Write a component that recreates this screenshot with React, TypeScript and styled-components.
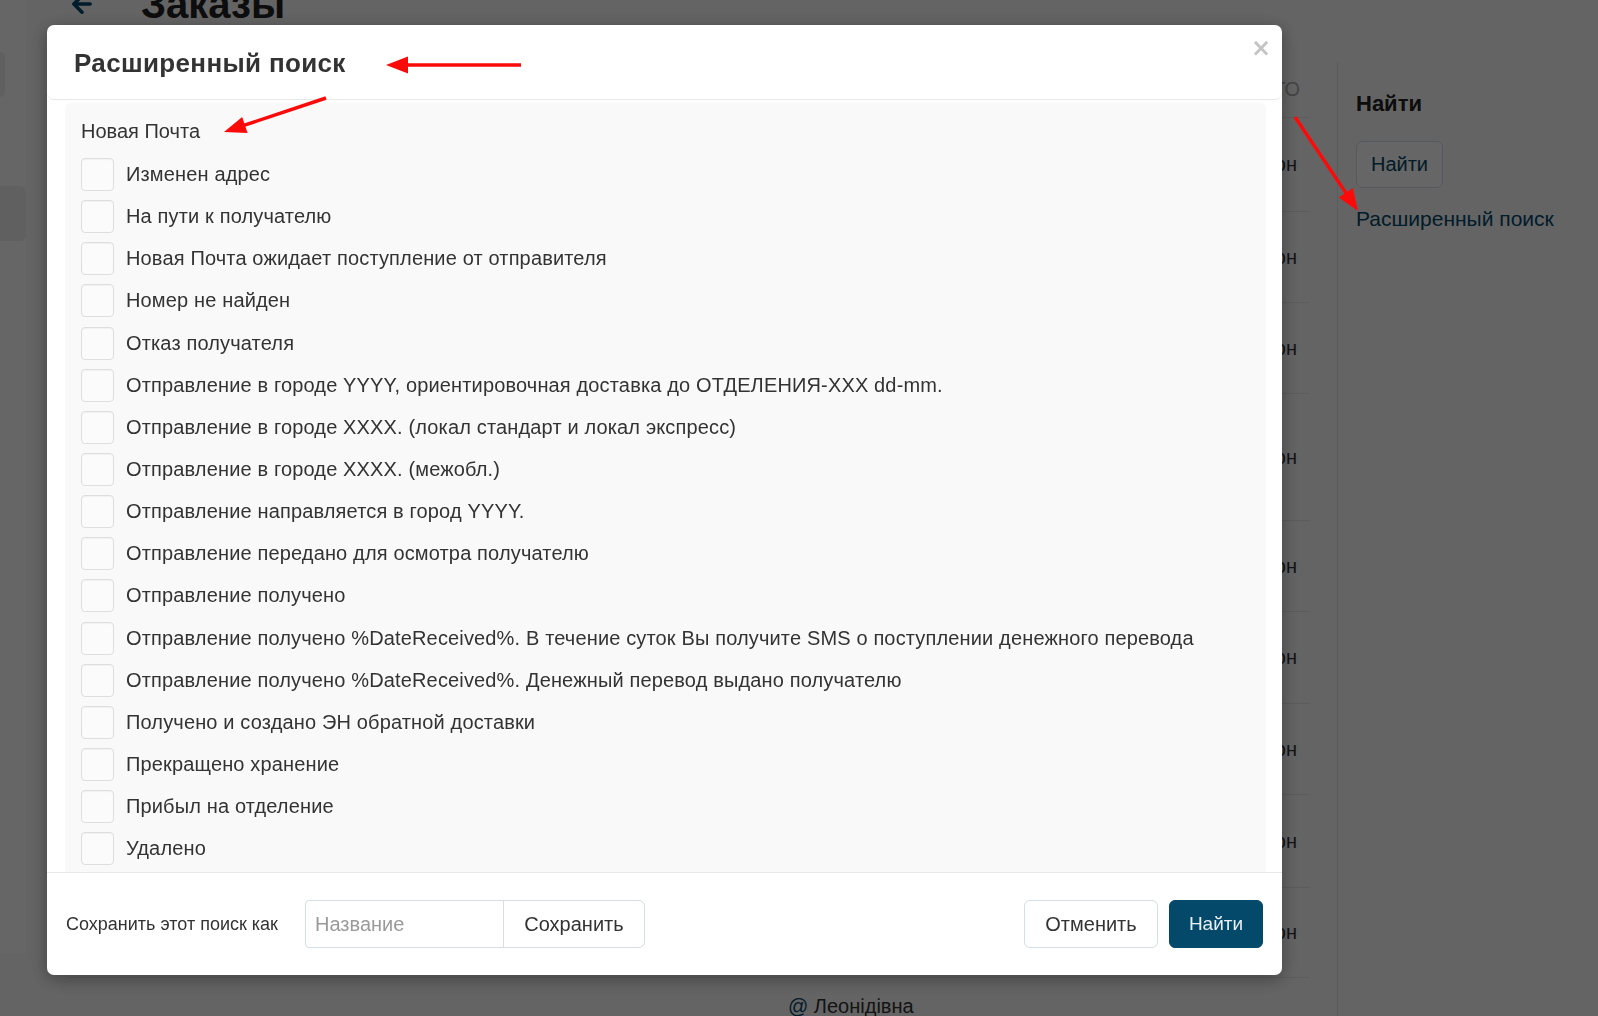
import React from 'react'
import styled, { createGlobalStyle } from 'styled-components'

const GlobalStyle = createGlobalStyle`
  html, body {
    margin: 0;
    padding: 0;
    width: 1598px;
    height: 1016px;
    overflow: hidden;
    background: #fafafa;
    font-family: 'Liberation Sans', Arial, sans-serif;
    color: #333;
  }
  * { box-sizing: border-box; }
`

const Page = styled.div`
  display: flex;
  width: 1598px;
  height: 1016px;
  overflow: hidden;
`

const Sidebar = styled.aside`
  width: 26px;
  height: 953px;
  background: #ffffff;
  display: flex;
  flex-direction: column;
  padding-top: 52px;
  gap: 89px;
`

const SideTab = styled.div<{ $w: number; $h: number }>`
  width: ${({ $w }) => $w}px;
  height: ${({ $h }) => $h}px;
  background: #f1f1f1;
  border-radius: 0 6px 6px 0;
`

const Main = styled.main`
  flex: 1;
  display: flex;
  flex-direction: column;
  padding-left: 42px;
`

const HeadingRow = styled.div`
  display: flex;
  align-items: center;
  gap: 45px;
  height: 48px;
  margin-top: -20px;
  color: #04486a;
`

const Heading = styled.h1`
  margin: 0;
  font-size: 40px;
  line-height: 48px;
  font-weight: 700;
  color: #222;
`

const Content = styled.div`
  display: flex;
  margin-top: 34px;
  flex: 1;
`

const Table = styled.div`
  width: 1241px;
  display: flex;
  flex-direction: column;
`

const TableHead = styled.div`
  height: 56px;
  display: flex;
  align-items: center;
  justify-content: flex-end;
  padding-right: 9px;
  font-size: 20px;
  color: #aaa;
  border-bottom: 1px solid #e5e5e5;
`

const TableRow = styled.div<{ $h: number }>`
  height: ${({ $h }) => $h}px;
  display: grid;
  grid-template-columns: 720px 1fr auto;
  align-items: center;
  padding-right: 12px;
  font-size: 20px;
  color: #333;
  border-bottom: 1px solid #e5e5e5;
`

const Cell = styled.span`
  white-space: nowrap;
`

const Mention = styled.span`
  color: #04486a;
`

const Divider = styled.div`
  width: 1px;
  background: #e5e5e5;
  margin-left: 28px;
`

const SidePanel = styled.div`
  padding: 28px 0 0 18px;
  display: flex;
  flex-direction: column;
  align-items: flex-start;
`

const PanelTitle = styled.h3`
  margin: 0;
  font-size: 22px;
  line-height: 28px;
  font-weight: 700;
  color: #222;
`

const PanelButton = styled.button`
  margin-top: 23px;
  width: 87px;
  height: 47px;
  border: 1px solid #d5dde5;
  border-radius: 6px;
  background: #fff;
  font-family: inherit;
  font-size: 20px;
  color: #04486a;
`

const PanelLink = styled.a`
  margin-top: 19px;
  font-size: 21px;
  color: #04486a;
  text-decoration: none;
  line-height: 24px;
`

const Overlay = styled.div`
  position: fixed;
  inset: 0;
  background: rgba(0, 0, 0, 0.6);
  padding: 25px 0 0 47px;
`

const Modal = styled.div`
  position: relative;
  width: 1235px;
  height: 950px;
  background: #fff;
  border-radius: 7px;
  box-shadow: 0 4px 18px rgba(0, 0, 0, 0.35);
  display: flex;
  flex-direction: column;
  overflow: hidden;
`

const ModalHeader = styled.div`
  height: 75px;
  display: flex;
  align-items: center;
  padding: 0 27px;
  border-bottom: 1px solid #e8e8e8;
  border-radius: 0 0 7px 7px;
`

const ModalTitle = styled.h2`
  margin: 2px 0 0;
  font-size: 26px;
  letter-spacing: 0.35px;
  font-weight: 700;
  color: #333;
`

const CloseButton = styled.button`
  position: absolute;
  top: 11px;
  right: 10px;
  width: 22px;
  height: 24px;
  border: 0;
  padding: 0;
  background: none;
  font-family: 'DejaVu Sans', sans-serif;
  font-size: 24px;
  font-weight: 700;
  line-height: 24px;
  color: #c4c4c4;
`

const ModalBody = styled.div`
  height: 772px;
  padding: 3px 16px 0 18px;
`

const Group = styled.div`
  height: 100%;
  background: #f9f9f9;
  border-radius: 6px 6px 0 0;
  padding: 17px 16px 0 16px;
  overflow: hidden;
`

const GroupTitle = styled.div`
  font-size: 20px;
  line-height: 22px;
  color: #333;
  margin-bottom: 16px;
`

const OptionList = styled.div`
  display: flex;
  flex-direction: column;
  gap: 9.15px;
`

const Option = styled.label`
  display: flex;
  align-items: center;
  gap: 12px;
  height: 33px;
  font-size: 20px;
  letter-spacing: 0.15px;
  color: #333;
  white-space: nowrap;
`

const Box = styled.span`
  width: 33px;
  height: 33px;
  flex: none;
  border: 1px solid #dedede;
  border-radius: 4px;
  background: #fbfbfb;
  box-shadow: inset 0 1px 1px rgba(0, 0, 0, 0.04);
`

const ModalFooter = styled.div`
  flex: 1;
  display: flex;
  align-items: center;
  justify-content: space-between;
  padding: 0 19px 0 19px;
  border-top: 1px solid #e8e8e8;
`

const SaveGroup = styled.div`
  display: flex;
  align-items: center;
`

const SaveLabel = styled.span`
  font-size: 18px;
  color: #333;
  margin-right: 27px;
`

const NameInput = styled.input`
  width: 199px;
  height: 48px;
  border: 1px solid #d5dde5;
  border-radius: 4px 0 0 4px;
  padding: 0 9px;
  font-family: inherit;
  font-size: 20px;
  color: #333;
  outline: none;

  &::placeholder {
    color: #9a9a9a;
  }
`

const Button = styled.button<{ $primary?: boolean; $w: number; $attached?: boolean }>`
  width: ${({ $w }) => $w}px;
  height: 48px;
  border: 1px solid ${({ $primary }) => ($primary ? '#04486a' : '#d5dde5')};
  border-radius: ${({ $attached }) => ($attached ? '0 6px 6px 0' : '6px')};
  margin-left: ${({ $attached }) => ($attached ? '-1px' : '0')};
  background: ${({ $primary }) => ($primary ? '#04486a' : '#fff')};
  color: ${({ $primary }) => ($primary ? '#e8f0f6' : '#333')};
  font-family: inherit;
  font-size: ${({ $primary }) => ($primary ? '19px' : '20px')};
  white-space: nowrap;
  cursor: pointer;
`

const Actions = styled.div`
  display: flex;
  gap: 11px;
`

const Annotations = styled.svg`
  position: fixed;
  inset: 0;
  pointer-events: none;
`

const statuses = [
  'Изменен адрес',
  'На пути к получателю',
  'Новая Почта ожидает поступление от отправителя',
  'Номер не найден',
  'Отказ получателя',
  'Отправление в городе YYYY, ориентировочная доставка до ОТДЕЛЕНИЯ-XXX dd-mm.',
  'Отправление в городе XXXX. (локал стандарт и локал экспресс)',
  'Отправление в городе XXXX. (межобл.)',
  'Отправление направляется в город YYYY.',
  'Отправление передано для осмотра получателю',
  'Отправление получено',
  'Отправление получено %DateReceived%. В течение суток Вы получите SMS о поступлении денежного перевода',
  'Отправление получено %DateReceived%. Денежный перевод выдано получателю',
  'Получено и создано ЭН обратной доставки',
  'Прекращено хранение',
  'Прибыл на отделение',
  'Удалено',
]

const rowHeights = [94, 91, 91, 127, 91, 92, 91, 93, 90]

type Pt = [number, number]

// красная стрелка-пометка: хвост -> острие
const Arrow = ({ from, to }: { from: Pt; to: Pt }) => {
  const dx = to[0] - from[0]
  const dy = to[1] - from[1]
  const len = Math.hypot(dx, dy)
  const ux = dx / len
  const uy = dy / len
  const head = 22
  const half = 8.5
  const bx = to[0] - ux * head
  const by = to[1] - uy * head
  const pts = [
    `${to[0]},${to[1]}`,
    `${bx - uy * half},${by + ux * half}`,
    `${bx + uy * half},${by - ux * half}`,
  ].join(' ')
  return (
    <g>
      <line x1={from[0]} y1={from[1]} x2={bx + ux * 2} y2={by + uy * 2} stroke="#fb0a0a" strokeWidth={3.5} />
      <polygon points={pts} fill="#fb0a0a" />
    </g>
  )
}

export default function App() {
  return (
    <>
      <GlobalStyle />
      <Page>
        <Sidebar>
          <SideTab $w={5} $h={45} />
          <SideTab $w={26} $h={55} />
        </Sidebar>
        <Main>
          <HeadingRow>
            <svg width="28" height="28" viewBox="0 0 24 24" fill="none" stroke="currentColor" strokeWidth="3" strokeLinecap="round" strokeLinejoin="round">
              <path d="M19 12H5M12 19l-7-7 7-7" />
            </svg>
            <Heading>Заказы</Heading>
          </HeadingRow>
          <Content>
            <Table>
              <TableHead>ИТОГО</TableHead>
              {rowHeights.map((h, i) => (
                <TableRow key={i} $h={h}>
                  <Cell />
                  <Cell />
                  <Cell>Телефон</Cell>
                </TableRow>
              ))}
              <TableRow $h={58}>
                <Cell />
                <Cell>
                  <Mention>@</Mention> Леонідівна
                </Cell>
                <Cell />
              </TableRow>
            </Table>
            <Divider />
            <SidePanel>
              <PanelTitle>Найти</PanelTitle>
              <PanelButton>Найти</PanelButton>
              <PanelLink href="#">Расширенный поиск</PanelLink>
            </SidePanel>
          </Content>
        </Main>
      </Page>

      <Overlay>
        <Modal>
          <ModalHeader>
            <ModalTitle>Расширенный поиск</ModalTitle>
          </ModalHeader>
          <CloseButton aria-label="close">×</CloseButton>
          <ModalBody>
            <Group>
              <GroupTitle>Новая Почта</GroupTitle>
              <OptionList>
                {statuses.map((s) => (
                  <Option key={s}>
                    <Box />
                    {s}
                  </Option>
                ))}
              </OptionList>
            </Group>
          </ModalBody>
          <ModalFooter>
            <SaveGroup>
              <SaveLabel>Сохранить этот поиск как</SaveLabel>
              <NameInput placeholder="Название" />
              <Button $w={142} $attached>
                Сохранить
              </Button>
            </SaveGroup>
            <Actions>
              <Button $w={134}>Отменить</Button>
              <Button $w={94} $primary>
                Найти
              </Button>
            </Actions>
          </ModalFooter>
        </Modal>
      </Overlay>

      <Annotations width="1598" height="1016" viewBox="0 0 1598 1016">
        <Arrow from={[521, 65]} to={[386, 65]} />
        <Arrow from={[326, 98]} to={[224, 132]} />
        <Arrow from={[1295, 117]} to={[1358, 211]} />
      </Annotations>
    </>
  )
}
